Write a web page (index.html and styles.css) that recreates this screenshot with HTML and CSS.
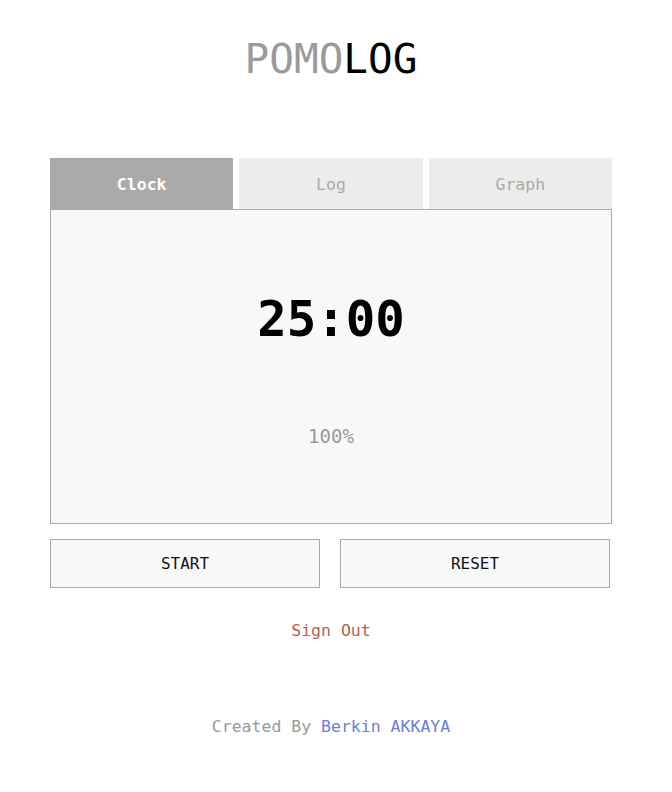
FILE: index.html
```html
<!DOCTYPE html>
<html>
<head>
<meta charset="utf-8">
<link rel="stylesheet" href="styles.css">
</head>
<body>
<div class="app">
  <h1 class="title"><span class="pomo">POMO</span><span class="log">LOG</span></h1>
  <div class="tabs">
    <div class="tab active">Clock</div>
    <div class="tab">Log</div>
    <div class="tab">Graph</div>
  </div>
  <div class="panel">
    <div class="time">25:00</div>
    <div class="percent">100%</div>
  </div>
  <div class="buttons">
    <button class="btn">START</button>
    <button class="btn">RESET</button>
  </div>
  <div class="signout">Sign Out</div>
  <div class="credit">Created By <span class="author">Berkin AKKAYA</span></div>
</div>
</body>
</html>
```
FILE: styles.css
```css
html, body {
  margin: 0;
  padding: 0;
  background: #fff;
}
body {
  font-family: "DejaVu Sans Mono", "Liberation Mono", monospace;
}
.app {
  width: 562px;
  margin-left: 50px;
  display: flex;
  flex-direction: column;
}
.title {
  margin: 0;
  height: 158px;
  box-sizing: border-box;
  padding-top: 33px;
  text-align: center;
  font-size: 41px;
  font-weight: normal;
  line-height: 52px;
  letter-spacing: 0;
}
.pomo { color: #9a9a9a; }
.log { color: #000; }
.tabs {
  display: flex;
  gap: 6px;
  height: 51px;
}
.tab {
  flex: 1;
  background: #ececec;
  color: #aaa;
  font-size: 16.5px;
  padding-top: 2px;
  display: flex;
  align-items: center;
  justify-content: center;
}
.tab.active {
  background: #aaa;
  color: #fff;
  font-weight: bold;
}
.panel {
  height: 315px;
  box-sizing: border-box;
  border: 1px solid #aaa;
  background: #f8f8f8;
  display: flex;
  flex-direction: column;
  align-items: center;
}
.time {
  margin-top: 80px;
  font-size: 49px;
  font-weight: bold;
  color: #000;
  line-height: 60px;
}
.percent {
  margin-top: 74px;
  font-size: 19px;
  color: #999;
  line-height: 24px;
}
.buttons {
  display: flex;
  gap: 20px;
  margin-top: 15px;
}
.btn {
  width: 270px;
  height: 49px;
  background: #f8f8f8;
  border: 1px solid #aaa;
  font-family: "DejaVu Sans Mono", "Liberation Mono", monospace;
  font-size: 16px;
  color: #111;
  padding: 0;
}
.signout {
  margin-top: 31px;
  text-align: center;
  color: #b5624f;
  font-size: 16.5px;
  line-height: 24px;
}
.credit {
  margin-top: 72px;
  text-align: center;
  color: #999;
  font-size: 16.5px;
  line-height: 24px;
}
.author { color: #6a7ddb; }
```
